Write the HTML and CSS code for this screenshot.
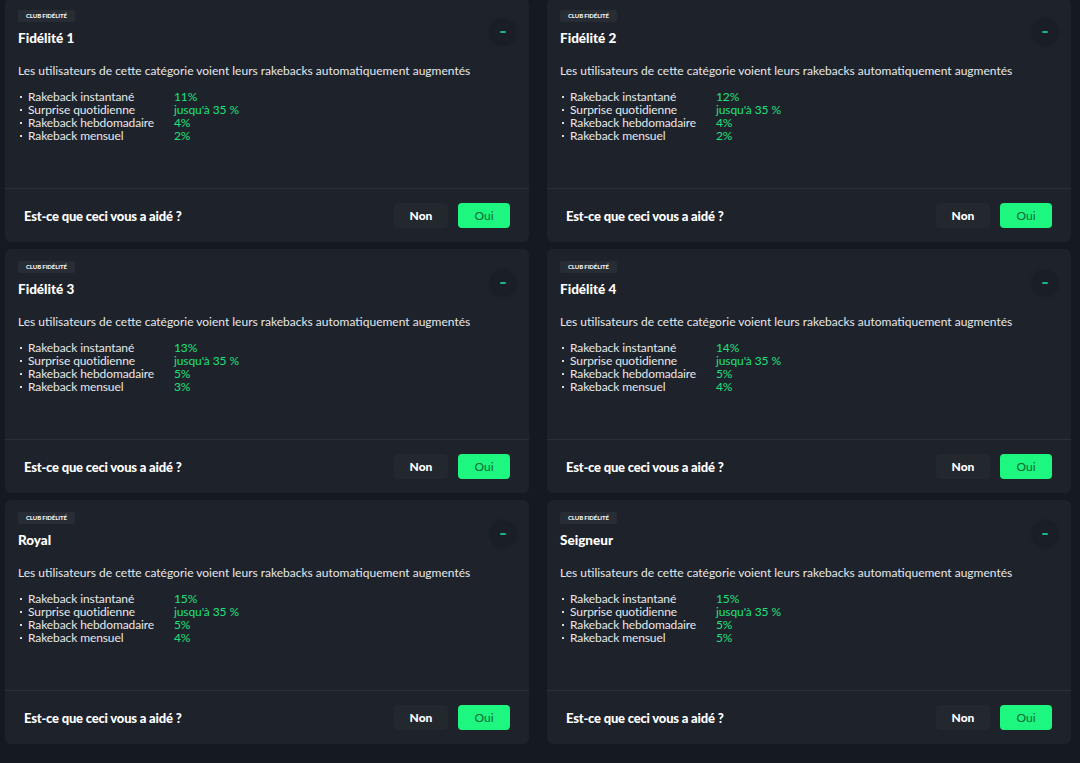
FILE: index.html
```html
<html lang="fr">
  <head>
    <meta charset="UTF-8" />
    <meta name="viewport" content="width=device-width, initial-scale=1.0" />
    <title>Club fidélité</title>
    <link rel="stylesheet" href="styles.css">
  </head>
  <body>
    <div class="grid">
      <div class="card">
        <div class="card-body">
          <div class="card-head">
            <div>
              <span class="badge">Club fidélité</span>
              <h2 class="title">Fidélité 1</h2>
            </div>
            <button class="toggle"><span></span></button>
          </div>
          <p class="desc">Les utilisateurs de cette catégorie voient leurs rakebacks automatiquement augmentés</p>
          <ul class="perks">
            <li><span class="perk-name">Rakeback instantané</span><span class="perk-value">11%</span></li>
            <li><span class="perk-name">Surprise quotidienne</span><span class="perk-value">jusqu'à 35 %</span></li>
            <li><span class="perk-name">Rakeback hebdomadaire</span><span class="perk-value">4%</span></li>
            <li><span class="perk-name">Rakeback mensuel</span><span class="perk-value">2%</span></li>
          </ul>
        </div>
        <div class="card-foot">
          <span class="question">Est-ce que ceci vous a aidé ?</span>
          <div class="votes"><button class="vote">Non</button><button class="vote vote-yes">Oui</button></div>
        </div>
      </div>

      <div class="card">
        <div class="card-body">
          <div class="card-head">
            <div>
              <span class="badge">Club fidélité</span>
              <h2 class="title">Fidélité 2</h2>
            </div>
            <button class="toggle"><span></span></button>
          </div>
          <p class="desc">Les utilisateurs de cette catégorie voient leurs rakebacks automatiquement augmentés</p>
          <ul class="perks">
            <li><span class="perk-name">Rakeback instantané</span><span class="perk-value">12%</span></li>
            <li><span class="perk-name">Surprise quotidienne</span><span class="perk-value">jusqu'à 35 %</span></li>
            <li><span class="perk-name">Rakeback hebdomadaire</span><span class="perk-value">4%</span></li>
            <li><span class="perk-name">Rakeback mensuel</span><span class="perk-value">2%</span></li>
          </ul>
        </div>
        <div class="card-foot">
          <span class="question">Est-ce que ceci vous a aidé ?</span>
          <div class="votes"><button class="vote">Non</button><button class="vote vote-yes">Oui</button></div>
        </div>
      </div>

      <div class="card">
        <div class="card-body">
          <div class="card-head">
            <div>
              <span class="badge">Club fidélité</span>
              <h2 class="title">Fidélité 3</h2>
            </div>
            <button class="toggle"><span></span></button>
          </div>
          <p class="desc">Les utilisateurs de cette catégorie voient leurs rakebacks automatiquement augmentés</p>
          <ul class="perks">
            <li><span class="perk-name">Rakeback instantané</span><span class="perk-value">13%</span></li>
            <li><span class="perk-name">Surprise quotidienne</span><span class="perk-value">jusqu'à 35 %</span></li>
            <li><span class="perk-name">Rakeback hebdomadaire</span><span class="perk-value">5%</span></li>
            <li><span class="perk-name">Rakeback mensuel</span><span class="perk-value">3%</span></li>
          </ul>
        </div>
        <div class="card-foot">
          <span class="question">Est-ce que ceci vous a aidé ?</span>
          <div class="votes"><button class="vote">Non</button><button class="vote vote-yes">Oui</button></div>
        </div>
      </div>

      <div class="card">
        <div class="card-body">
          <div class="card-head">
            <div>
              <span class="badge">Club fidélité</span>
              <h2 class="title">Fidélité 4</h2>
            </div>
            <button class="toggle"><span></span></button>
          </div>
          <p class="desc">Les utilisateurs de cette catégorie voient leurs rakebacks automatiquement augmentés</p>
          <ul class="perks">
            <li><span class="perk-name">Rakeback instantané</span><span class="perk-value">14%</span></li>
            <li><span class="perk-name">Surprise quotidienne</span><span class="perk-value">jusqu'à 35 %</span></li>
            <li><span class="perk-name">Rakeback hebdomadaire</span><span class="perk-value">5%</span></li>
            <li><span class="perk-name">Rakeback mensuel</span><span class="perk-value">4%</span></li>
          </ul>
        </div>
        <div class="card-foot">
          <span class="question">Est-ce que ceci vous a aidé ?</span>
          <div class="votes"><button class="vote">Non</button><button class="vote vote-yes">Oui</button></div>
        </div>
      </div>

      <div class="card">
        <div class="card-body">
          <div class="card-head">
            <div>
              <span class="badge">Club fidélité</span>
              <h2 class="title">Royal</h2>
            </div>
            <button class="toggle"><span></span></button>
          </div>
          <p class="desc">Les utilisateurs de cette catégorie voient leurs rakebacks automatiquement augmentés</p>
          <ul class="perks">
            <li><span class="perk-name">Rakeback instantané</span><span class="perk-value">15%</span></li>
            <li><span class="perk-name">Surprise quotidienne</span><span class="perk-value">jusqu'à 35 %</span></li>
            <li><span class="perk-name">Rakeback hebdomadaire</span><span class="perk-value">5%</span></li>
            <li><span class="perk-name">Rakeback mensuel</span><span class="perk-value">4%</span></li>
          </ul>
        </div>
        <div class="card-foot">
          <span class="question">Est-ce que ceci vous a aidé ?</span>
          <div class="votes"><button class="vote">Non</button><button class="vote vote-yes">Oui</button></div>
        </div>
      </div>

      <div class="card">
        <div class="card-body">
          <div class="card-head">
            <div>
              <span class="badge">Club fidélité</span>
              <h2 class="title">Seigneur</h2>
            </div>
            <button class="toggle"><span></span></button>
          </div>
          <p class="desc">Les utilisateurs de cette catégorie voient leurs rakebacks automatiquement augmentés</p>
          <ul class="perks">
            <li><span class="perk-name">Rakeback instantané</span><span class="perk-value">15%</span></li>
            <li><span class="perk-name">Surprise quotidienne</span><span class="perk-value">jusqu'à 35 %</span></li>
            <li><span class="perk-name">Rakeback hebdomadaire</span><span class="perk-value">5%</span></li>
            <li><span class="perk-name">Rakeback mensuel</span><span class="perk-value">5%</span></li>
          </ul>
        </div>
        <div class="card-foot">
          <span class="question">Est-ce que ceci vous a aidé ?</span>
          <div class="votes"><button class="vote">Non</button><button class="vote vote-yes">Oui</button></div>
        </div>
      </div>
    </div>
  </body>
</html>
```

FILE: styles.css
```css
*,
*::after,
*::before {
  margin: 0;
  padding: 0;
  box-sizing: border-box;
}

:root {
  --page-bg: #151a21;
  --card-bg: #1e222a;
  --line: #2c3139;
  --text: #eceef1;
  --green: #1fe07c;
  --btn-green: #1df67f;
  --font: "Lato", "Liberation Sans", sans-serif;
}

body {
  background: var(--page-bg);
  color: var(--text);
  font-family: var(--font);
  width: 1080px;
  height: 763px;
  overflow: hidden;
}

.grid {
  display: grid;
  grid-template-columns: 524px 524px;
  grid-auto-rows: 244px;
  column-gap: 18px;
  row-gap: 7px;
  margin-top: -2px;
  padding-left: 5px;
}

.card {
  background: var(--card-bg);
  border-radius: 6px;
  display: flex;
  flex-direction: column;
  overflow: hidden;
}

.card-body {
  height: 191px;
  border-bottom: 1px solid var(--line);
  padding: 12px 14px 0 13px;
}

.card-head {
  display: flex;
  justify-content: space-between;
  align-items: flex-start;
}

.badge {
  display: inline-block;
  height: 12px;
  line-height: 12px;
  padding: 0 8px;
  border-radius: 2px;
  background: #282c34;
  font-size: 6px;
  font-weight: 900;
  text-transform: uppercase;
  letter-spacing: -0.1px;
  color: #f2f2f2;
}

.title {
  margin-top: 8px;
  font-size: 13.5px;
  line-height: 16px;
  font-weight: 900;
  color: #ffffff;
}

.toggle {
  width: 24px;
  height: 24px;
  margin-top: 10px;
  border: none;
  border-radius: 50%;
  background: #1a1e25;
  box-shadow: 0 0 4px rgba(0, 0, 0, 0.35);
  display: flex;
  align-items: center;
  justify-content: center;
  cursor: pointer;
}

.toggle span {
  width: 6px;
  height: 2px;
  border-radius: 1px;
  background: #1bb487;
}

.desc {
  margin-top: 18px;
  font-size: 12px;
  line-height: 14px;
  color: #e6e8eb;
}

.perks {
  list-style: none;
  margin-top: 12px;
  font-size: 12px;
  line-height: 13px;
  letter-spacing: -0.1px;
}

.perks li {
  display: flex;
}

.perk-name {
  width: 156px;
  padding-left: 10px;
  position: relative;
  color: #e6e8eb;
}

.perk-name::before {
  content: "";
  position: absolute;
  left: 2px;
  top: 6px;
  width: 2px;
  height: 2px;
  background: #d6d8db;
}

.perk-value {
  color: var(--green);
}

.card-foot {
  flex: 1;
  display: flex;
  align-items: center;
  justify-content: space-between;
  padding: 0 19px;
}

.question {
  font-size: 13px;
  font-weight: 900;
  letter-spacing: -0.2px;
  color: #ffffff;
}

.votes {
  display: flex;
  gap: 10px;
}

.vote {
  height: 25px;
  width: 54px;
  border: none;
  border-radius: 4px;
  background: #23272e;
  color: #ffffff;
  font-family: var(--font);
  font-size: 12px;
  font-weight: 900;
  cursor: pointer;
}

.vote-yes {
  width: 52px;
  background: var(--btn-green);
  color: #0c6a36;
  font-weight: 400;
}
```
